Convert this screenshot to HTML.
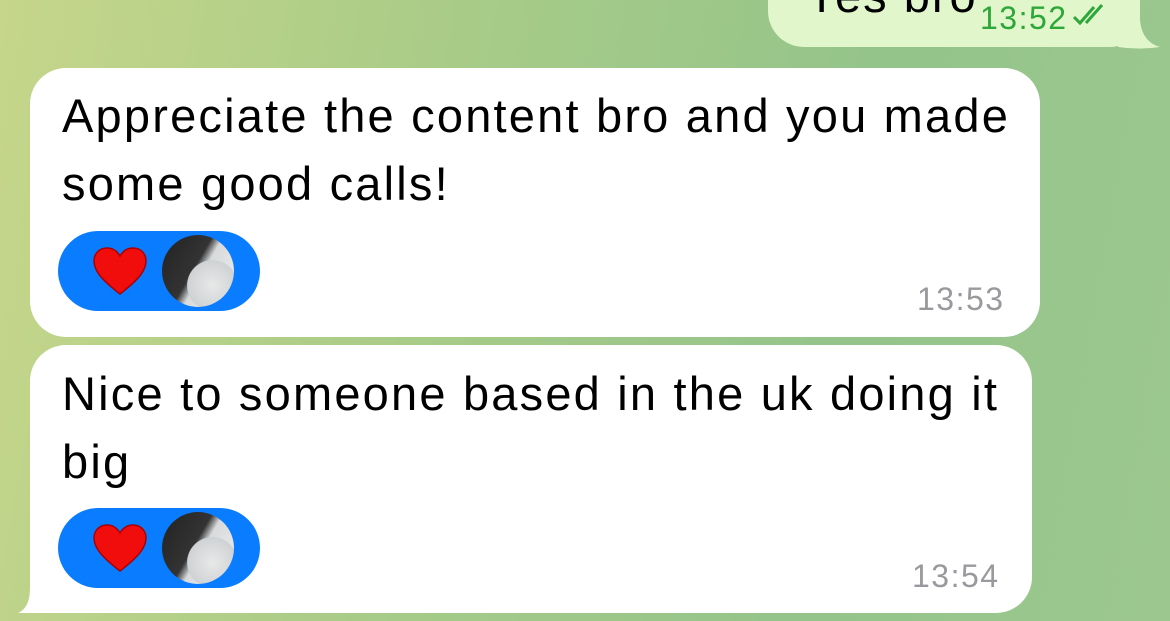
<!DOCTYPE html>
<html><head><style>
*{margin:0;padding:0;box-sizing:border-box}
body{width:1170px;height:621px;overflow:hidden;position:relative;font-family:"Liberation Sans",sans-serif;
background:linear-gradient(100deg,#c6d68a 0%,#a9cc88 35%,#94c48a 70%,#9cc88f 100%);}
.b{position:absolute;background:#fff;border-radius:36px}
.t{position:absolute;font-size:47px;color:#000;line-height:68px;letter-spacing:2.2px;white-space:nowrap}
.tm{position:absolute;font-size:32px;color:#9a9a9e;letter-spacing:1.5px}
.pill{position:absolute;width:202px;height:80px;border-radius:40px;background:#0a7cff}
.av{position:absolute;width:72px;height:72px;border-radius:50%;left:104px;top:4px;
background:radial-gradient(circle at 70% 70%,#e8e8e8 0,#cfd2d4 35%,transparent 36%),linear-gradient(120deg,#222 0,#333 45%,#d8dadc 55%,#eef0f2 100%);}
</style></head><body>
<div class="b" style="left:768px;top:-40px;width:372px;height:87px;background:#e1f7cb;border-radius:0 0 30px 36px"></div>
<svg style="position:absolute;left:1118px;top:20px" width="44" height="30"><path d="M0 0 H22 Q24 22 42 27 Q20 30 0 27Z" fill="#e1f7cb"/></svg>
<div style="position:absolute;left:806px;top:-32px;font-size:47px;letter-spacing:2px">Yes bro</div>
<div style="position:absolute;left:980px;top:0px;font-size:32px;color:#2da63a;letter-spacing:1.5px">13:52</div>
<svg style="position:absolute;left:1070px;top:3px" width="44" height="24"><path d="M4 14 L10 20 L24 4 M16 20 L32 2" stroke="#2da63a" stroke-width="3" fill="none"/></svg>

<div class="b" style="left:30px;top:68px;width:1010px;height:269px"></div>
<div class="t" style="left:62px;top:82px">Appreciate the content bro and you made<br>some good calls!</div>
<div class="pill" style="left:58px;top:231px">
<svg style="position:absolute;left:34px;top:16px" width="56" height="50" viewBox="0 0 56 50"><path d="M28 47 C10 33 2 24 2 14 C2 6 8 1 15 1 C21 1 25 4 28 9 C31 4 35 1 41 1 C48 1 54 6 54 14 C54 24 46 33 28 47Z" fill="#f20d0d" stroke="#a00" stroke-width="1.5"/></svg>
<div class="av"></div></div>
<div class="tm" style="left:917px;top:281px">13:53</div>

<div class="b" style="left:30px;top:345px;width:1002px;height:268px;border-bottom-left-radius:0"></div>
<svg style="position:absolute;left:16px;top:580px" width="40" height="34"><path d="M14 0 H40 V33 H2 Q14 28 14 8Z" fill="#fff"/></svg>
<div class="t" style="left:62px;top:360px">Nice to someone based in the uk doing it<br>big</div>
<div class="pill" style="left:58px;top:508px">
<svg style="position:absolute;left:34px;top:16px" width="56" height="50" viewBox="0 0 56 50"><path d="M28 47 C10 33 2 24 2 14 C2 6 8 1 15 1 C21 1 25 4 28 9 C31 4 35 1 41 1 C48 1 54 6 54 14 C54 24 46 33 28 47Z" fill="#f20d0d" stroke="#a00" stroke-width="1.5"/></svg>
<div class="av"></div></div>
<div class="tm" style="left:912px;top:558px">13:54</div>
</body></html>
